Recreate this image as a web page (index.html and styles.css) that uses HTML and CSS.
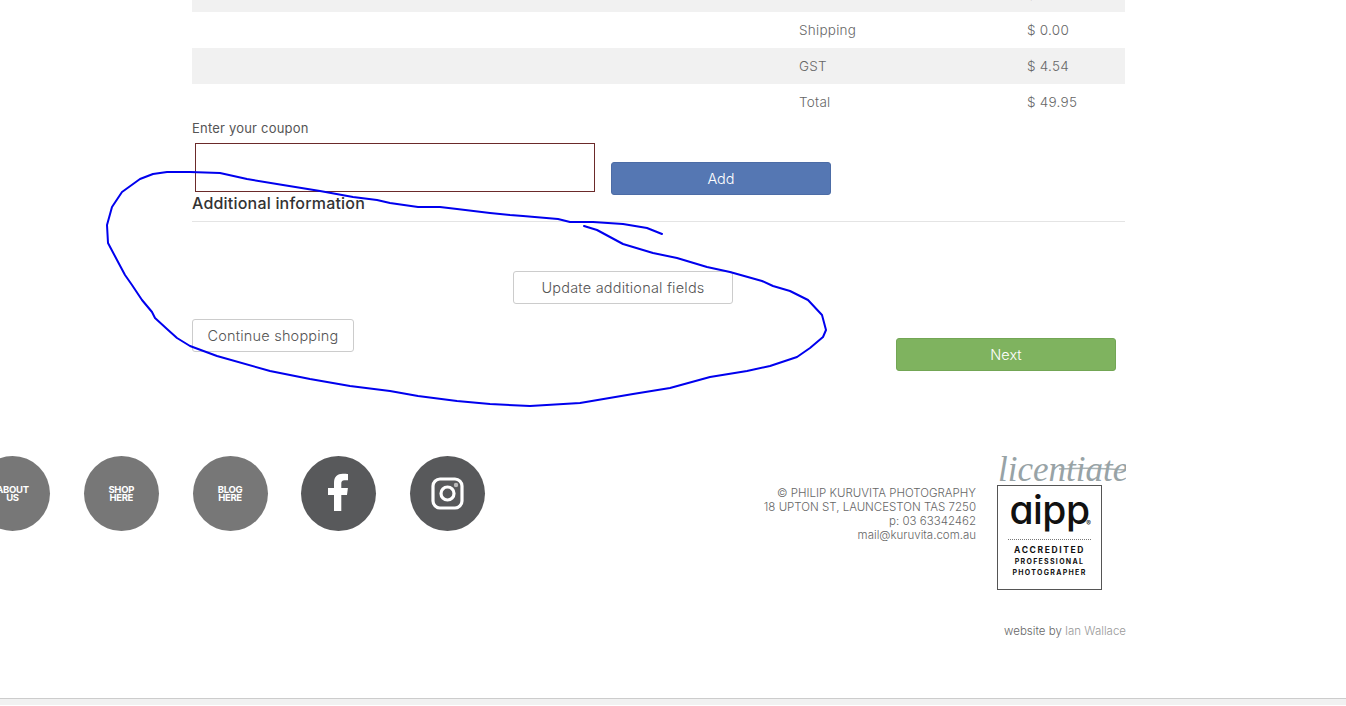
FILE: index.html
```html
<!DOCTYPE html>
<html lang="en">
<head>
  <meta charset="UTF-8">
  <meta name="viewport" content="width=device-width, initial-scale=1.0">
  <title>Checkout</title>
  <link rel="stylesheet" href="styles.css">
</head>
<body>

  <div class="container">
    <div class="summary">
      <div class="summary-row"><span>Subtotal</span><span class="amount">$ 45.41</span></div>
      <div class="summary-row"><span>Shipping</span><span class="amount">$ 0.00</span></div>
      <div class="summary-row"><span>GST</span><span class="amount">$ 4.54</span></div>
      <div class="summary-row"><span>Total</span><span class="amount">$ 49.95</span></div>
    </div>

    <label class="coupon-label" for="coupon">Enter your coupon</label>
    <div class="coupon-row">
      <input type="text" id="coupon" class="coupon-input">
      <button class="btn btn-add">Add</button>
    </div>

    <h3 class="section-title">Additional information</h3>

    <div class="update-row">
      <button class="btn btn-plain btn-update">Update additional fields</button>
    </div>

    <div class="nav-row">
      <button class="btn btn-plain btn-continue">Continue shopping</button>
      <button class="btn btn-next">Next</button>
    </div>

    <div class="footer">
      <div class="footer-links">
        <a class="circle circle-text">ABOUT<br>US</a>
        <a class="circle circle-text">SHOP<br>HERE</a>
        <a class="circle circle-text">BLOG<br>HERE</a>
        <a class="circle circle-social">
          <svg width="75" height="75" viewBox="0 0 75 75">
            <path fill="#fff" d="M33 55V39h-6v-7h6v-5c0-6.500 3.500-9.200 8.700-9.200 2.300 0 4.300.2 5.300.3v6.200h-3.400c-2.700 0-3.300 1.300-3.300 3.200V32h6.600l-.9 7h-5.700v16z"/>
          </svg>
        </a>
        <a class="circle circle-social">
          <svg width="75" height="75" viewBox="0 0 75 75">
            <rect x="23" y="23" width="29" height="29" rx="7" fill="none" stroke="#fff" stroke-width="3.200"/>
            <circle cx="37.500" cy="37.500" r="6.500" fill="none" stroke="#fff" stroke-width="3.200"/>
            <circle cx="46" cy="29" r="2.200" fill="#bbb"/>
          </svg>
        </a>
      </div>

      <div class="address">
        © PHILIP KURUVITA PHOTOGRAPHY<br>
        18 UPTON ST, LAUNCESTON TAS 7250<br>
        p: 03 63342462<br>
        mail@kuruvita.com.au
      </div>

      <div class="badge">
        <svg class="licentiate" width="129" height="29" viewBox="0 0 129 29">
          <path d="M62 13c20-1 45-1 66 1" fill="none" stroke="#a9b3b5" stroke-width="1.500"/>
          <text x="1" y="25" class="licentiate-text">licentiate</text>
        </svg>
        <div class="aipp">
          <div class="aipp-name">aipp<span class="aipp-reg">®</span></div>
          <div class="aipp-line1">ACCREDITED</div>
          <div class="aipp-line2">PROFESSIONAL</div>
          <div class="aipp-line2">PHOTOGRAPHER</div>
        </div>
      </div>
    </div>

    <div class="credit">website by <span class="credit-name">Ian Wallace</span></div>
  </div>

  <div class="bottom-bar"></div>

  <svg class="ink" width="1346" height="706" viewBox="0 0 1346 706">
    <path d="M662 234L647 228L623 224L593 222L570 222L558 219L523 216L510 215L490 213L457 209L440 207L418 207L390 203L377 200L353 197L320 191L283 185L247 179L220 173L190 172L167 172L153 174L140 179L122 192L112 207L107 225L108 243L117 260L125 275L132 285L142 300L152 312L155 318L167 329L177 338L190 346L217 356L270 371L310 379L350 386L390 391L418 396L457 401L490 404L530 406L580 403L633 394L670 388L710 377L747 371L770 366L797 357L810 348L823 337L826 330L822 315L808 300L790 291L773 286L762 281L730 272L707 267L677 258L653 253L623 244L610 237L597 230L584 226"/>
  </svg>

</body>
</html>
```

FILE: styles.css
```css
* {
  margin: 0;
  padding: 0;
  box-sizing: border-box;
}

html, body {
  height: 706px;
  overflow: hidden;
}

body {
  position: relative;
  font-family: 'Inter', sans-serif;
  background-color: #fff;
  color: #555;
}

.container {
  width: 933px;
  margin-left: 192px;
}

.summary {
  margin-top: -24px;
}

.summary-row {
  display: flex;
  align-items: center;
  height: 36px;
  padding-left: 607px;
  font-size: 13.5px;
  font-weight: 300;
  letter-spacing: 0.25px;
  color: #666;
}

.summary-row:nth-child(odd) {
  background-color: #f1f1f1;
}

.summary-row span:first-child {
  width: 228px;
}

.coupon-label {
  display: block;
  height: 17px;
  margin-bottom: 6px;
  font-size: 13px;
  line-height: 17px;
  font-weight: 400;
  letter-spacing: 0.2px;
  color: #555;
}

.coupon-row {
  display: flex;
  align-items: flex-start;
  gap: 16px;
  padding-left: 3px;
}

.coupon-input {
  width: 400px;
  height: 49px;
  border: 1px solid #6b2a2a;
  background: #fff;
}

.btn {
  width: 220px;
  height: 33px;
  border-radius: 3px;
  border: 1px solid #ccc;
  font-family: 'Inter', sans-serif;
  font-size: 14.5px;
  font-weight: 300;
  cursor: pointer;
}

.btn-add {
  margin-top: 19px;
  background-color: #5577b3;
  border-color: #4c6ca6;
  color: #fff;
}

.btn-next {
  margin-top: 19px;
  margin-right: 9px;
  background-color: #7fb35f;
  border-color: #73a655;
  color: #fff;
}

.btn-plain {
  background-color: #fff;
  color: #555;
  letter-spacing: 0.2px;
}

.btn-continue {
  width: 162px;
}

.section-title {
  height: 28px;
  margin-top: -1px;
  font-size: 16px;
  line-height: 18px;
  font-weight: 500;
  letter-spacing: 0.2px;
  color: #333;
  border-bottom: 1px solid #e4e4e4;
}

.update-row {
  padding-left: 321px;
  margin-top: 49px;
}

.nav-row {
  display: flex;
  justify-content: space-between;
  align-items: flex-start;
  margin-top: 15px;
}

.footer {
  display: flex;
  align-items: flex-start;
  margin-top: 85px;
  margin-left: -217px;
  width: 1151px;
}

.footer-links {
  display: flex;
  gap: 33.75px;
}

.circle {
  display: flex;
  align-items: center;
  justify-content: center;
  width: 75px;
  height: 75px;
  border-radius: 50%;
}

.circle-text {
  background-color: #777;
  color: #fff;
  font-size: 9.5px;
  line-height: 8px;
  font-weight: 700;
  text-align: center;
  letter-spacing: -0.3px;
}

.circle-social {
  background-color: #58595b;
}

.address {
  margin-top: 30px;
  margin-left: auto;
  margin-right: 21px;
  font-size: 11.5px;
  line-height: 14px;
  font-weight: 300;
  text-align: right;
  color: #666;
}

.badge {
  width: 129px;
}

.licentiate {
  display: block;
}

.licentiate-text {
  font-family: 'Liberation Serif', serif;
  font-style: italic;
  font-size: 35px;
  fill: #98a3a6;
}

.aipp {
  width: 105px;
  height: 105px;
  border: 1px solid #555;
  padding: 0 10px;
  color: #111;
  text-align: center;
}

.aipp-name {
  position: relative;
  height: 54px;
  margin-bottom: 5px;
  border-bottom: 1px dotted #777;
  font-size: 39px;
  line-height: 48px;
  font-weight: 500;
  letter-spacing: -0.5px;
  font-feature-settings: "cv11";
}

.aipp-reg {
  position: absolute;
  right: 0;
  top: 34px;
  font-size: 7px;
  line-height: 8px;
  letter-spacing: 0;
}

.aipp-line1 {
  font-size: 8.5px;
  line-height: 11px;
  font-weight: 700;
  letter-spacing: 1.6px;
  white-space: nowrap;
}

.aipp-line2 {
  font-size: 7px;
  line-height: 11px;
  font-weight: 700;
  letter-spacing: 1.3px;
  white-space: nowrap;
}

.credit {
  margin-top: 34px;
  width: 934px;
  font-size: 11.5px;
  line-height: 14px;
  font-weight: 300;
  text-align: right;
  color: #666;
}

.credit-name {
  color: #999;
}

.bottom-bar {
  height: 7px;
  margin-top: 60px;
  background-color: #f1f1f1;
  border-top: 1px solid #ccc;
}

.ink {
  position: absolute;
  top: 0;
  left: 0;
  pointer-events: none;
}

.ink path {
  fill: none;
  stroke: #0000ee;
  stroke-width: 2;
  stroke-linejoin: round;
  stroke-linecap: round;
}
```
